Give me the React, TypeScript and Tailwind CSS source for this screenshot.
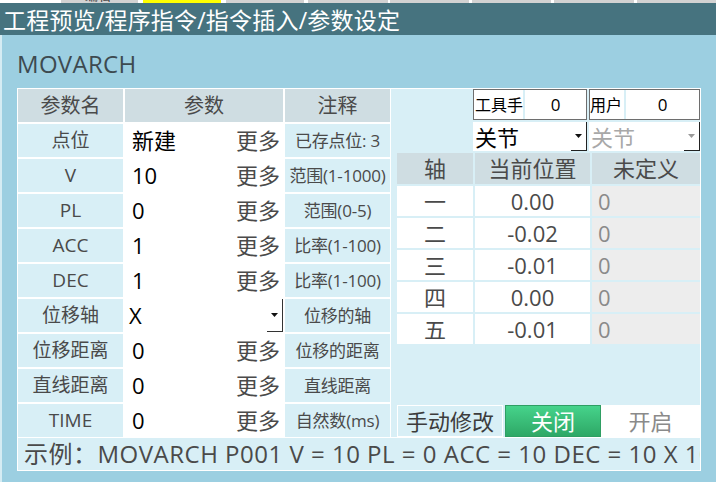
import React from 'react';

const F = '"Open Sans","Noto Sans CJK SC",sans-serif';

type Row = { name: string; val?: string; select?: string; note: string };

const rows: Row[] = [
  { name: '点位', val: '新建', note: '已存点位: 3' },
  { name: 'V', val: '10', note: '范围(1-1000)' },
  { name: 'PL', val: '0', note: '范围(0-5)' },
  { name: 'ACC', val: '1', note: '比率(1-100)' },
  { name: 'DEC', val: '1', note: '比率(1-100)' },
  { name: '位移轴', select: 'X', note: '位移的轴' },
  { name: '位移距离', val: '0', note: '位移的距离' },
  { name: '直线距离', val: '0', note: '直线距离' },
  { name: 'TIME', val: '0', note: '自然数(ms)' },
];

const axes = [
  ['一', '0.00'],
  ['二', '-0.02'],
  ['三', '-0.01'],
  ['四', '0.00'],
  ['五', '-0.01'],
];

function Arrow({ gray }: { gray?: boolean }) {
  return (
    <svg width="7" height="4" viewBox="0 0 7 4">
      <path d="M0 0H7L3.5 4Z" fill={gray ? '#9a9a9a' : '#111'} />
    </svg>
  );
}

function Combo({ text, gray, w }: { text: string; gray?: boolean; w: string }) {
  return (
    <div className={`${w} h-[29px] bg-white flex items-stretch`}>
      <div
        className={`flex-1 flex items-center pl-[2px] text-[22px] leading-none ${gray ? 'text-[#a8a8a8]' : 'text-black'}`}
      >
        {text}
      </div>
      <div className="w-[16px] flex flex-col">
        <div className="flex-1 flex items-center justify-center border-r border-r-[#222]">
          <Arrow gray={gray} />
        </div>
        <div className="h-[1px] bg-[#222]" />
      </div>
    </div>
  );
}

export default function App() {
  const tabs: [number, number, boolean][] = [
    [61, 77, false],
    [5, 78, true],
    [5, 78, false],
    [4, 80, false],
    [2, 79, false],
    [3, 79, false],
    [3, 80, false],
    [3, 79, false],
  ];
  return (
    <div className="w-[716px] h-[482px] bg-[#9ccfe1] overflow-hidden flex flex-col" style={{ fontFamily: F }}>
      <div className="h-[3px] bg-white flex shrink-0">
        {tabs.map(([ml, w, y], i) => (
          <div
            key={i}
            className={`h-[3px] overflow-hidden ${y ? 'bg-[#ffff00]' : 'bg-[#d2d2d2]'}`}
            style={{ marginLeft: ml, width: w }}
          >
            {i === 0 && <div className="ml-[24px] -mt-[12px] text-[13px] leading-[14px] text-[#333]">编辑</div>}
          </div>
        ))}
      </div>
      <div className="h-[32px] bg-[#46737f] flex items-end pl-[3px] shrink-0">
        <span className="text-white text-[23px] leading-[29px] tracking-[0.2px]">工程预览/程序指令/指令插入/参数设定</span>
      </div>
      <div className="flex-1 flex">
        <div className="w-[2px] bg-[#d5ecf3]" />
        <div className="flex-1 pl-[15px]">
          <div className="h-[53px] pt-[15px] text-[24px] leading-[28px] tracking-[0.3px] text-[#3d4a50]">MOVARCH</div>
          <div className="w-[684px] bg-white p-[1px] flex flex-col gap-[1px]">
            <div className="flex gap-[1px]">
              <div className="grid grid-cols-[105px_106px_50px_105px] auto-rows-[33px] gap-x-[2px] gap-y-[2px]">
                <div className="bg-[#cfdde2] flex items-center justify-center text-[20px] text-[#4a4a4a]">参数名</div>
                <div className="col-span-2 bg-[#cfdde2] flex items-center justify-center text-[20px] text-[#4a4a4a]">参数</div>
                <div className="bg-[#cfdde2] flex items-center justify-center text-[20px] text-[#4a4a4a]">注释</div>
                {rows.map((r) => (
                  <React.Fragment key={r.name}>
                    <div className="bg-[#d8eff6] flex items-center justify-center text-[19px] text-[#4a4a4a]">
                      {r.name}
                    </div>
                    {r.select ? (
                      <div className="col-span-2 bg-white flex items-stretch">
                        <div className="flex-1 flex items-center pl-[4px] text-[22px] text-black">{r.select}</div>
                        <div className="w-[16px] flex flex-col">
                          <div className="flex-1 flex items-center justify-center border-r border-r-[#333]">
                            <Arrow />
                          </div>
                          <div className="h-[1px] bg-[#333]" />
                        </div>
                      </div>
                    ) : (
                      <>
                        <div className="bg-white flex items-center pl-[7px] text-[22px] text-black">{r.val}</div>
                        <div className="bg-white flex items-center justify-center text-[22px] text-[#4a4a4a]">更多</div>
                      </>
                    )}
                    <div className="bg-[#d8eff6] flex items-center justify-center text-[17px] tracking-[-0.2px] text-[#4a4a4a] whitespace-nowrap">
                      {r.note}
                    </div>
                  </React.Fragment>
                ))}
              </div>
              <div className="flex-1 bg-[#d8eff6] flex flex-col">
                <div className="flex pl-[82px] gap-[2px]">
                  <div className="w-[114px] h-[31px] border border-[#6e6e6e] bg-white flex">
                    <div className="w-[51px] flex items-center text-[16px] text-black pl-[1px] border-r-2 border-r-[#d8eff6]">工具手</div>
                    <div className="flex-1 flex items-center justify-center text-[17px] text-black">0</div>
                  </div>
                  <div className="w-[111px] h-[31px] border border-[#6e6e6e] bg-white flex">
                    <div className="w-[36px] flex items-center text-[16px] text-black border-r-2 border-r-[#d8eff6]">用户</div>
                    <div className="flex-1 flex items-center justify-center text-[17px] text-black">0</div>
                  </div>
                </div>
                <div className="flex pl-[82px] gap-[2px] mt-[2px]">
                  <Combo text="关节" w="w-[114px]" />
                  <Combo text="关节" w="w-[111px]" gray />
                </div>
                <div className="ml-[6px] mt-[2px] grid grid-cols-[76px_115px_108px] gap-[2px]">
                  <div className="h-[31px] bg-[#cfdde2] flex items-center justify-center text-[22px] text-[#4a4a4a]">轴</div>
                  <div className="h-[31px] bg-[#cfdde2] flex items-center justify-center text-[22px] text-[#4a4a4a]">当前位置</div>
                  <div className="h-[31px] bg-[#cfdde2] flex items-center justify-center text-[22px] text-[#4a4a4a]">未定义</div>
                  {axes.map(([a, v]) => (
                    <React.Fragment key={a}>
                      <div className="h-[30px] bg-white flex items-center justify-center text-[22px] text-[#4a4a4a]">{a}</div>
                      <div className="h-[30px] bg-white flex items-center justify-center text-[22px] text-[#4a4a4a]">{v}</div>
                      <div className="h-[30px] bg-[#ededed] flex items-center pl-[6px] text-[22px] text-[#8a8a8a]">0</div>
                    </React.Fragment>
                  ))}
                </div>
                <div className="flex-1" />
                <div className="ml-[6px] flex h-[32px]">
                  <div className="w-[106px] border border-white flex items-center justify-center text-[22px] text-[#3c3c3c]">手动修改</div>
                  <div className="w-[96px] ml-[2px] border border-[#2f9e63] bg-gradient-to-b from-[#46d38b] to-[#2ea866] flex items-center justify-center text-[22px] text-white">关闭</div>
                  <div className="flex-1 bg-white flex items-center justify-center text-[22px] text-[#8a8a8a]">开启</div>
                </div>
              </div>
            </div>
            <div className="h-[32px] bg-[#d8eff6] flex items-center pl-[6px] text-[24px] tracking-[0.5px] text-[#4a4a4a] whitespace-nowrap overflow-hidden">
              示例：MOVARCH P001 V = 10 PL = 0 ACC = 10 DEC = 10 X 10
            </div>
          </div>
        </div>
      </div>
    </div>
  );
}
